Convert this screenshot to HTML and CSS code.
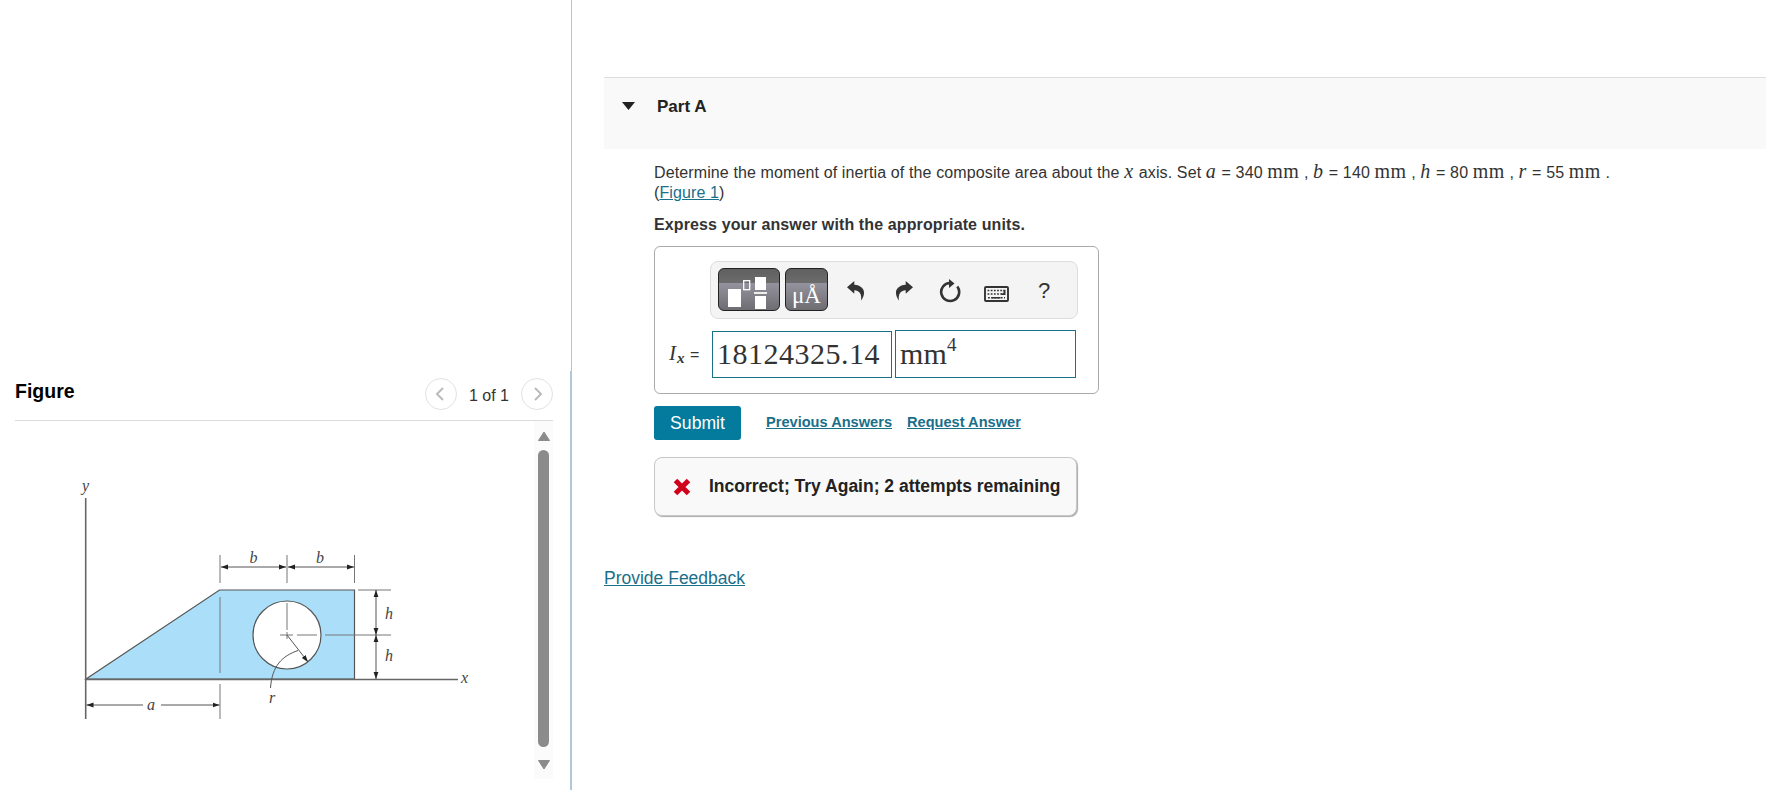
FILE: index.html
```html
<!DOCTYPE html>
<html lang="en">
<head>
  <meta charset="UTF-8">
  <meta name="viewport" content="width=device-width, initial-scale=1.0">
  <title>Part A</title>
  <link rel="stylesheet" href="styles.css">
</head>
<body>

  <!-- left: figure panel -->
  <div class="left">
    <div class="figure-panel">
      <div class="figure-head">
        <h2>Figure</h2>
        <div class="pager">
          <button class="round"><svg width="30" height="30" viewBox="0 0 30 30"><path d="M17 9l-6 6 6 6"/></svg></button>
          <span>1 of 1</span>
          <button class="round"><svg width="30" height="30" viewBox="0 0 30 30"><path d="M13 9l6 6-6 6"/></svg></button>
        </div>
      </div>
      <div class="figure-body">
        <svg class="diagram" width="420" height="260" viewBox="0 0 420 260">
          <defs>
            <marker id="arrow" markerUnits="userSpaceOnUse" markerWidth="8" markerHeight="6" refX="7" refY="3" orient="auto-start-reverse">
              <path d="M0 0.600L7 3L0 5.400z"/>
            </marker>
          </defs>
          <path class="area" d="M26 209L159.500 120H294.500V209z"/>
          <circle class="hole" cx="227" cy="165" r="34"/>
          <g class="axis">
            <path d="M25.700 28V249"/>
            <path d="M26 209.500H398"/>
          </g>
          <g class="ext">
            <path d="M160 85v28M160 127v76M160 214v35"/>
            <path d="M227 85v28M227 133v27M227 162v7M294.500 85v28"/>
            <path d="M220 165h13M237 165h20M265 165h66M298 120h33"/>
          </g>
          <g class="dim">
            <path d="M161 97H226" marker-start="url(#arrow)" marker-end="url(#arrow)"/>
            <path d="M228 97H294" marker-start="url(#arrow)" marker-end="url(#arrow)"/>
            <path d="M316 120V165" marker-start="url(#arrow)" marker-end="url(#arrow)"/>
            <path d="M316 165V209" marker-start="url(#arrow)" marker-end="url(#arrow)"/>
            <path d="M83 235H26.500" marker-end="url(#arrow)"/>
            <path d="M101 235H159.500" marker-end="url(#arrow)"/>
            <path d="M227 165L248 192" marker-end="url(#arrow)"/>
            <path d="M238 180.500C222 186 212 196 210.500 218"/>
          </g>
          <g class="labels">
            <text x="22" y="21">y</text>
            <text x="401" y="213">x</text>
            <text x="189.500" y="93">b</text>
            <text x="256" y="93">b</text>
            <text x="325" y="149">h</text>
            <text x="325" y="191">h</text>
            <text x="87" y="240">a</text>
            <text x="209" y="233">r</text>
          </g>
        </svg>
        <div class="scrollbar">
          <svg width="12" height="10" viewBox="0 0 12 10"><path d="M6 1L11.500 9.500H0.500z"/></svg>
          <div class="thumb"></div>
          <svg width="12" height="10" viewBox="0 0 12 10"><path d="M6 9L11.500 0.500H0.500z"/></svg>
        </div>
      </div>
    </div>
  </div>

  <!-- right: question -->
  <div class="right">
    <div class="part-head">
      <svg width="13" height="8" viewBox="0 0 13 8"><path d="M0 0H13L6.500 8z"/></svg>
      <h2>Part A</h2>
    </div>

    <div class="question">
      <p class="prompt">Determine the moment of inertia of the composite area about the <i>x</i> axis. Set <i>a</i> = 340 <span class="unit">mm</span> , <i>b</i> = 140 <span class="unit">mm</span> , <i>h</i> = 80 <span class="unit">mm</span> , <i>r</i> = 55 <span class="unit">mm</span> .<br>(<a href="#">Figure 1</a>)</p>
      <p class="instruction">Express your answer with the appropriate units.</p>

      <div class="answer-box">
        <div class="toolbar">
          <button class="dark wide">
            <svg width="62" height="43" viewBox="0 0 62 43">
              <rect x="10" y="21" width="13" height="18" fill="#fff"/>
              <rect x="25.700" y="12.700" width="6" height="9" fill="none" stroke="#fff" stroke-width="1.300"/>
              <rect x="37" y="9" width="11" height="13" fill="#fff"/>
              <rect x="36" y="24" width="13" height="2" fill="#eee"/>
              <rect x="37" y="28" width="11" height="13" fill="#fff"/>
            </svg>
          </button>
          <button class="dark units"><span>μÅ</span></button>
          <svg class="tool undo" width="18" height="20" viewBox="0 0 18 20"><path d="M0 6.300L7.300 0V3.800C13.500 4.300 17.500 7.500 17 12.500C16.700 15.500 15.300 18 14 19.500C15 14 12.800 9.500 7.300 9.300V12.700z"/></svg>
          <svg class="tool redo" width="18" height="20" viewBox="0 0 18 20"><path d="M18 6.300L10.700 0V3.800C4.500 4.300 0.500 7.500 1 12.500C1.300 15.500 2.700 18 4 19.500C3 14 5.200 9.500 10.700 9.300V12.700z"/></svg>
          <svg class="tool reset" width="22" height="24" viewBox="0 0 22 24"><path d="M18.300 7.500A9 9 0 1 1 11 4" fill="none" stroke="#333" stroke-width="2.600"/><path d="M10 0L15.500 4.500L10 9z"/></svg>
          <svg class="tool keyboard" width="25" height="16" viewBox="0 0 25 16">
            <rect x="1" y="1" width="23" height="14" rx="1" fill="none" stroke="#333" stroke-width="1.900"/>
            <path d="M3.500 4.500H20M3.500 8H18M4 11.700H21" fill="none" stroke="#333" stroke-width="1.600" stroke-dasharray="1.800 1.400"/>
            <path d="M19.500 3.700h2v5.200h-4v-1.700h2zM7.500 10.900h9v1.700h-9z"/>
          </svg>
          <span class="help">?</span>
        </div>
        <div class="fields">
          <label><i>I</i><sub>x</sub> <span>=</span></label>
          <div class="field value">18124325.14</div>
          <div class="field units-field">mm<sup>4</sup></div>
        </div>
      </div>

      <div class="actions">
        <button class="submit">Submit</button>
        <a href="#">Previous Answers</a>
        <a href="#">Request Answer</a>
      </div>

      <div class="feedback">
        <svg width="18" height="18" viewBox="0 0 18 18"><path d="M2.500 2.500L15.500 15.500M15.500 2.500L2.500 15.500"/></svg>
        <span>Incorrect; Try Again; 2 attempts remaining</span>
      </div>
    </div>

    <a class="provide" href="#">Provide Feedback</a>
  </div>

</body>
</html>
```
FILE: styles.css
```css
* { box-sizing: border-box; }

body {
  margin: 0;
  display: flex;
  height: 790px;
  overflow: hidden;
  background: #fff;
  color: #333;
  font-family: "Liberation Sans", Arial, sans-serif;
  font-size: 16px;
}

h2, p { margin: 0; }
a { color: #1a6f89; }
button { font-family: inherit; padding: 0; }

/* figure panel */
.left {
  width: 572px;
  flex: none;
  border-right: 1px solid #b9c4d0;
  display: flex;
  flex-direction: column;
  justify-content: flex-end;
}
.figure-panel {
  height: 419px;
  padding: 0 17px 0 15px;
  border-right: 1px solid #b4c8dc;
}
.figure-head {
  height: 50px;
  display: flex;
  justify-content: space-between;
  border-bottom: 1px solid #d9dcdf;
}
.figure-head h2 {
  font-size: 19.5px;
  line-height: 22px;
  color: #000;
  padding: 9px 0 0 0;
}
.pager {
  display: flex;
  padding-top: 7px;
  gap: 12px;
}
.pager span { line-height: 20px; padding-top: 8px; }
.round {
  width: 32px;
  height: 32px;
  border: 1px solid #e2e2e2;
  border-radius: 50%;
  background: #fff;
}
.round path { fill: none; stroke: #bbb; stroke-width: 2; }
.round svg { display: block; }

.figure-body {
  display: flex;
  justify-content: space-between;
  height: 358px;
}
.diagram { margin: 49px 0 0 45px; }
.area { fill: #abdff9; stroke: #555; stroke-width: 1.2; }
.hole { fill: #fff; stroke: #555; stroke-width: 1.2; }
.axis path { stroke: #666; stroke-width: 1.6; }
.ext path { fill: none; stroke: #777; stroke-width: 1; }
.dim path { fill: none; stroke: #555; stroke-width: 1; }
#arrow path { fill: #222; }
.labels {
  font: italic 16px "Liberation Serif", serif;
  fill: #444;
}
.scrollbar {
  width: 19px;
  background: #fbfbfb;
  display: flex;
  flex-direction: column;
  align-items: center;
  padding: 10px 0 9px;
}
.scrollbar path { fill: #8b8b8b; stroke: #8b8b8b; stroke-linejoin: round; }
.thumb {
  flex: 1;
  width: 11px;
  margin: 9px 0 13px;
  border-radius: 6px;
  background: #8b8b8b;
}

/* question */
.right {
  flex: 1;
  padding: 77px 0 0 32px;
}
.part-head {
  height: 72px;
  padding: 19px 0 0 18px;
  display: flex;
  align-items: flex-start;
  gap: 22px;
  background: #f9f9f9;
  border-top: 1px solid #ddd;
}
.part-head svg { fill: #222; margin-top: 5px; }
.part-head h2 {
  font-size: 17px;
  line-height: 20px;
  color: #222;
}
.question { padding-left: 50px; }
.prompt {
  padding-top: 14px;
  line-height: 20px;
  letter-spacing: 0.12px;
  white-space: nowrap;
}
.prompt i {
  font-family: "Liberation Serif", serif;
  font-size: 20px;
  line-height: 0;
  letter-spacing: 1.2px;
}
.unit {
  font-family: "Liberation Serif", serif;
  font-size: 20px;
  line-height: 0;
  letter-spacing: 0.5px;
}
.instruction {
  margin-top: 12px;
  font-weight: bold;
  line-height: 20px;
  letter-spacing: 0.12px;
}

.answer-box {
  width: 445px;
  height: 148px;
  margin-top: 11px;
  padding: 14px 0 0 14px;
  border: 1px solid #aaa;
  border-radius: 6px;
}
.toolbar {
  width: 368px;
  height: 58px;
  margin-left: 41px;
  padding: 6px 7px;
  display: flex;
  background: #f4f4f4;
  border: 1px solid #ddd;
  border-radius: 8px;
}
.dark {
  height: 43px;
  border: 1px solid #222;
  border-radius: 6px;
  background: linear-gradient(#606060, #6c6c6c 34%, #94929c 35%, #6e6d72);
  color: #fff;
}
.wide { width: 62px; }
.wide svg { display: block; margin: -1px; }
.units {
  width: 43px;
  margin-left: 5px;
  font: 23px/28px "Liberation Serif", serif;
}
.units span { display: block; padding-top: 13px; }
.tool { fill: #333; flex: none; }
.undo { margin: 13px 0 0 19px; }
.redo { margin: 13px 0 0 30px; }
.reset { margin: 11px 0 0 26px; }
.keyboard { margin: 18px 0 0 23px; }
.help {
  margin: 9px 0 0 29px;
  font-size: 22px;
  line-height: 28px;
}

.fields {
  display: flex;
  align-items: flex-end;
  height: 48px;
  margin-top: 11px;
}
.fields label {
  width: 43px;
  height: 37px;
  font-size: 16px;
  white-space: nowrap;
}
.fields i { font: italic 21px "Liberation Serif", serif; letter-spacing: 1px; }
.fields sub {
  font: italic bold 15px/1 "Liberation Serif", serif;
  vertical-align: -3px;
  letter-spacing: 1px;
}
.field {
  width: 180px;
  height: 47px;
  border: 1px solid #1a6f89;
  padding-left: 4px;
  font: 30px/44px "Liberation Serif", serif;
  letter-spacing: 0.5px;
  white-space: nowrap;
}
.units-field {
  width: 181px;
  height: 48px;
  margin-left: 3px;
  line-height: 46px;
  letter-spacing: 0.2px;
}
.units-field sup {
  font-size: 19px;
  line-height: 0;
  vertical-align: 13px;
}

.actions {
  display: flex;
  margin-top: 12px;
  font-size: 14.6px;
  font-weight: bold;
  line-height: 32px;
}
.submit {
  width: 87px;
  height: 34px;
  margin-right: 25px;
  border: 0;
  border-radius: 3px;
  background: #047a9c;
  color: #fff;
  font-size: 17.6px;
}
.actions a + a { margin-left: 15px; }

.feedback {
  width: 423px;
  height: 59px;
  margin-top: 17px;
  padding-left: 18px;
  display: flex;
  align-items: center;
  gap: 18px;
  background: #f9f9f9;
  border: 1px solid #c7c7c7;
  border-radius: 8px;
  box-shadow: 1px 1px 1px #aaa;
  color: #222;
  font-size: 17.5px;
  font-weight: bold;
  white-space: nowrap;
}
.feedback path { stroke: #d0021b; stroke-width: 5; }
.provide {
  display: inline-block;
  margin-top: 51px;
  font-size: 17.5px;
  line-height: 22px;
}
```
